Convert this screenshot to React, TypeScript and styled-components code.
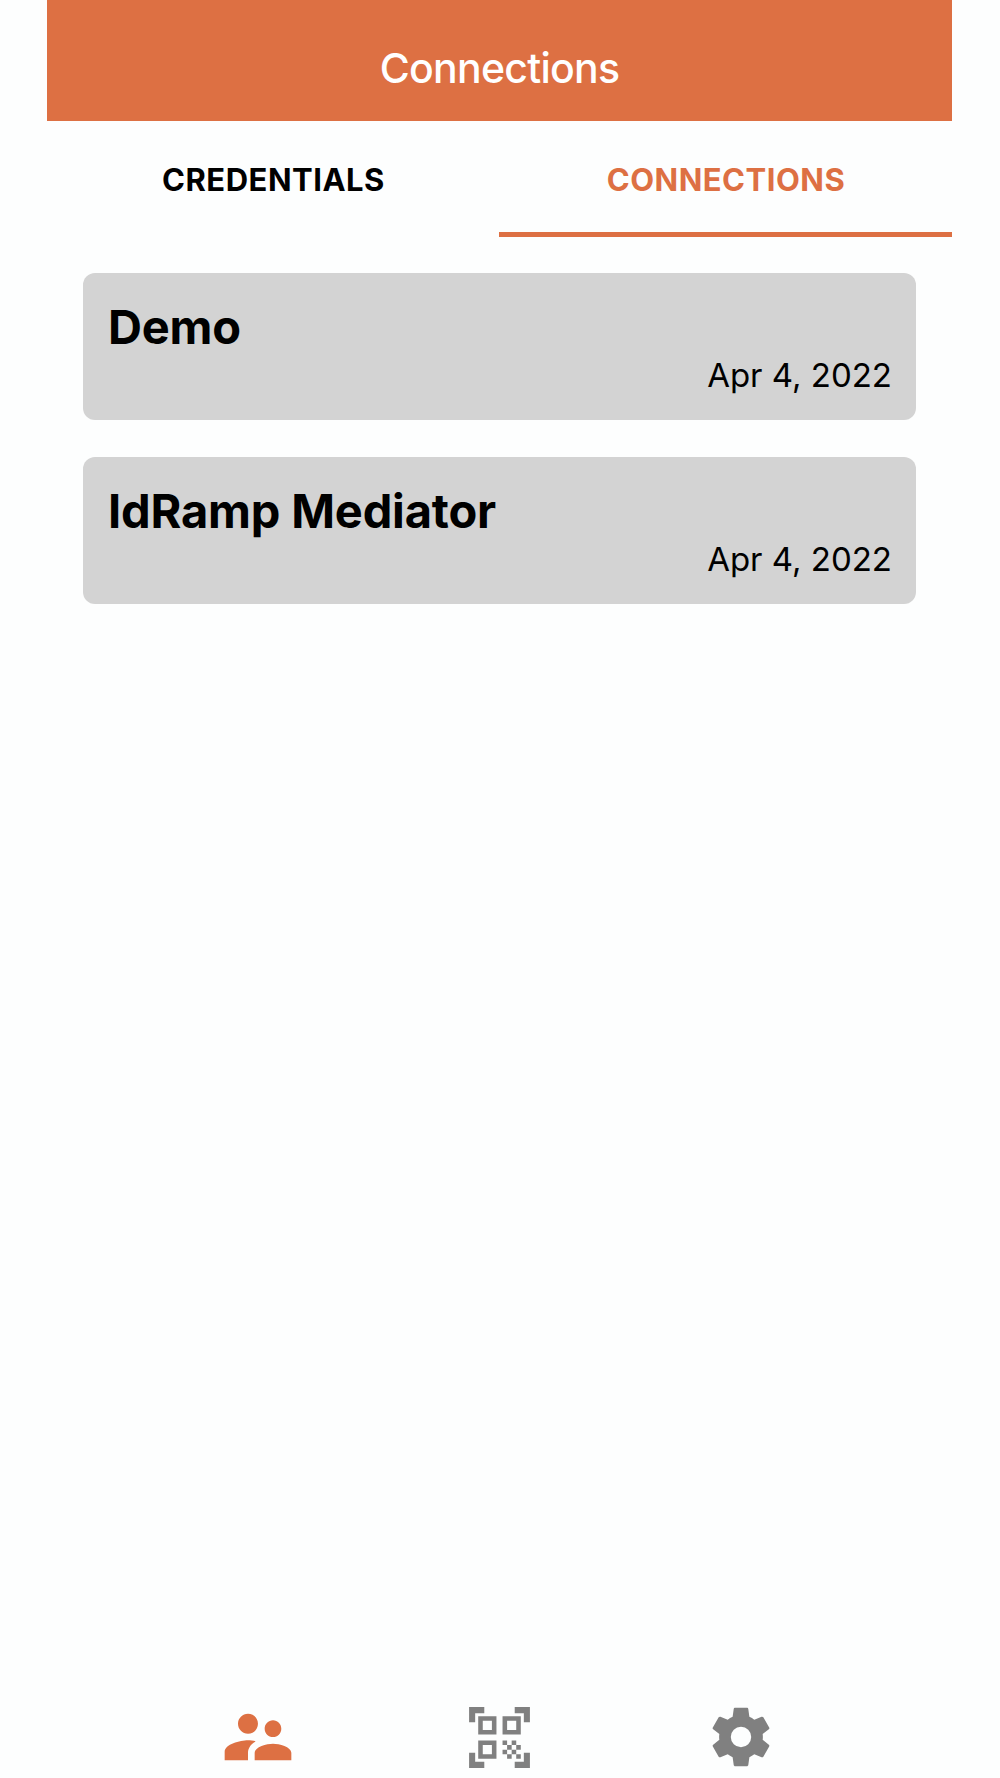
import React from "react";
import styled, { createGlobalStyle } from "styled-components";

const accent = "#dd7043";
const muted = "#808080";

const GlobalStyle = createGlobalStyle`
  * { box-sizing: border-box; }
  body { margin: 0; background: #fdfefe; }
`;

const Screen = styled.div`
  width: 905px;
  height: 1778px;
  margin-left: 47px;
  display: flex;
  flex-direction: column;
  overflow: hidden;
  font-family: Inter, "Liberation Sans", sans-serif;
  color: #000;
`;

const Header = styled.header`
  height: 120.7px;
  flex: none;
  padding-top: 42.6px;
  background: ${accent};
  text-align: center;
`;

const Title = styled.h1`
  margin: 0;
  font-size: 41px;
  line-height: 50px;
  font-weight: 550;
  letter-spacing: -0.75px;
  color: #fff;
`;

const Tabs = styled.nav`
  height: 116.3px;
  flex: none;
  display: grid;
  grid-template-columns: 452px 453px;
`;

const Tab = styled.button<{ $active?: boolean }>`
  padding: 7px 0 0 1px;
  border: 0;
  border-bottom: 5px solid ${(p) => (p.$active ? accent : "transparent")};
  background: none;
  font: 700 31px/38px Inter, "Liberation Sans", sans-serif;
  letter-spacing: 0.5px;
  color: ${(p) => (p.$active ? accent : "#000")};
`;

const List = styled.main`
  flex: 1;
  padding: 36px 36px 0;
  display: flex;
  flex-direction: column;
  gap: 37px;
`;

const Card = styled.article`
  height: 147px;
  padding: 24px 24px 0 25px;
  border-radius: 12px;
  background: #d3d3d3;
`;

const Name = styled.h2`
  margin: 0;
  font-size: 47px;
  line-height: 59px;
  font-weight: 700;
  letter-spacing: -0.17px;
`;

const DateText = styled.p`
  margin: 0;
  font-size: 33px;
  line-height: 39px;
  text-align: right;
`;

const BottomBar = styled.nav`
  height: 82px;
  flex: none;
  padding: 0 90px;
  display: grid;
  grid-template-columns: repeat(3, 1fr);
  place-items: center;
`;

const Icon = styled.svg<{ $size: number; $color: string }>`
  display: block;
  width: ${(p) => p.$size}px;
  height: ${(p) => p.$size}px;
  fill: ${(p) => p.$color};
`;

const connections = [
  { name: "Demo", date: "Apr 4, 2022" },
  { name: "IdRamp Mediator", date: "Apr 4, 2022" },
];

const icons = [
  {
    label: "People",
    size: 80,
    color: accent,
    d: "M16.5 12c1.38 0 2.49-1.12 2.49-2.5S17.88 7 16.5 7C15.12 7 14 8.12 14 9.5s1.12 2.5 2.5 2.5zM9 11c1.66 0 2.99-1.34 2.99-3S10.66 5 9 5C7.34 5 6 6.34 6 8s1.34 3 3 3zm7.5 3c-1.83 0-5.5.92-5.5 2.75V19h11v-2.25c0-1.83-3.67-2.75-5.5-2.75zM9 13c-2.33 0-7 1.17-7 3.5V19h7v-2.25c0-.85.33-2.34 2.37-3.47C10.5 13.1 9.66 13 9 13z",
  },
  {
    label: "Scan",
    size: 73,
    color: muted,
    d: "M9.5 6.5v3h-3v-3h3M11 5H5v6h6V5zm-1.5 9.5v3h-3v-3h3M11 13H5v6h6v-6zm6.5-6.5v3h-3v-3h3M19 5h-6v6h6V5zM13 13h1.5v1.5H13zM14.5 14.5H16V16h-1.5zM16 13h1.5v1.5H16zM13 16h1.5v1.5H13zM14.5 17.5H16V19h-1.5zM16 16h1.5v1.5H16zM17.5 14.5H19V16h-1.5zM17.5 17.5H19V19h-1.5zM22 7h-2V4h-3V2h5zM22 22v-5h-2v3h-3v2zM2 22h5v-2H4v-3H2zM2 2v5h2V4h3V2z",
  },
  {
    label: "Settings",
    size: 70,
    color: muted,
    d: "M12 15.5A3.5 3.5 0 0 1 8.5 12 3.5 3.5 0 0 1 12 8.5 3.5 3.5 0 0 1 15.5 12 3.5 3.5 0 0 1 12 15.5M19.43 12.97C19.47 12.65 19.5 12.33 19.5 12C19.5 11.67 19.47 11.34 19.43 11L21.54 9.37C21.73 9.22 21.78 8.95 21.66 8.73L19.66 5.27C19.54 5.05 19.27 4.96 19.05 5.05L16.56 6.05C16.04 5.66 15.5 5.32 14.87 5.07L14.5 2.42C14.46 2.18 14.25 2 14 2H10C9.75 2 9.54 2.18 9.5 2.42L9.13 5.07C8.5 5.32 7.96 5.66 7.44 6.05L4.95 5.05C4.73 4.96 4.46 5.05 4.34 5.27L2.34 8.73C2.21 8.95 2.27 9.22 2.46 9.37L4.57 11C4.53 11.34 4.5 11.67 4.5 12C4.5 12.33 4.53 12.65 4.57 12.97L2.46 14.63C2.27 14.78 2.21 15.05 2.34 15.27L4.34 18.73C4.46 18.95 4.73 19.03 4.95 18.95L7.44 17.94C7.96 18.34 8.5 18.68 9.13 18.93L9.5 21.58C9.54 21.82 9.75 22 10 22H14C14.25 22 14.46 21.82 14.5 21.58L14.87 18.93C15.5 18.67 16.04 18.34 16.56 17.94L19.05 18.95C19.27 19.03 19.54 18.95 19.66 18.73L21.66 15.27C21.78 15.05 21.73 14.78 21.54 14.63L19.43 12.97Z",
  },
];

export default function App() {
  return (
    <>
      <GlobalStyle />
      <Screen>
        <Header>
          <Title>Connections</Title>
        </Header>
        <Tabs>
          <Tab>CREDENTIALS</Tab>
          <Tab $active>CONNECTIONS</Tab>
        </Tabs>
        <List>
          {connections.map((c) => (
            <Card key={c.name}>
              <Name>{c.name}</Name>
              <DateText>{c.date}</DateText>
            </Card>
          ))}
        </List>
        <BottomBar>
          {icons.map((i) => (
            <Icon key={i.label} viewBox="0 0 24 24" $size={i.size} $color={i.color} aria-label={i.label}>
              <path d={i.d} />
            </Icon>
          ))}
        </BottomBar>
      </Screen>
    </>
  );
}
